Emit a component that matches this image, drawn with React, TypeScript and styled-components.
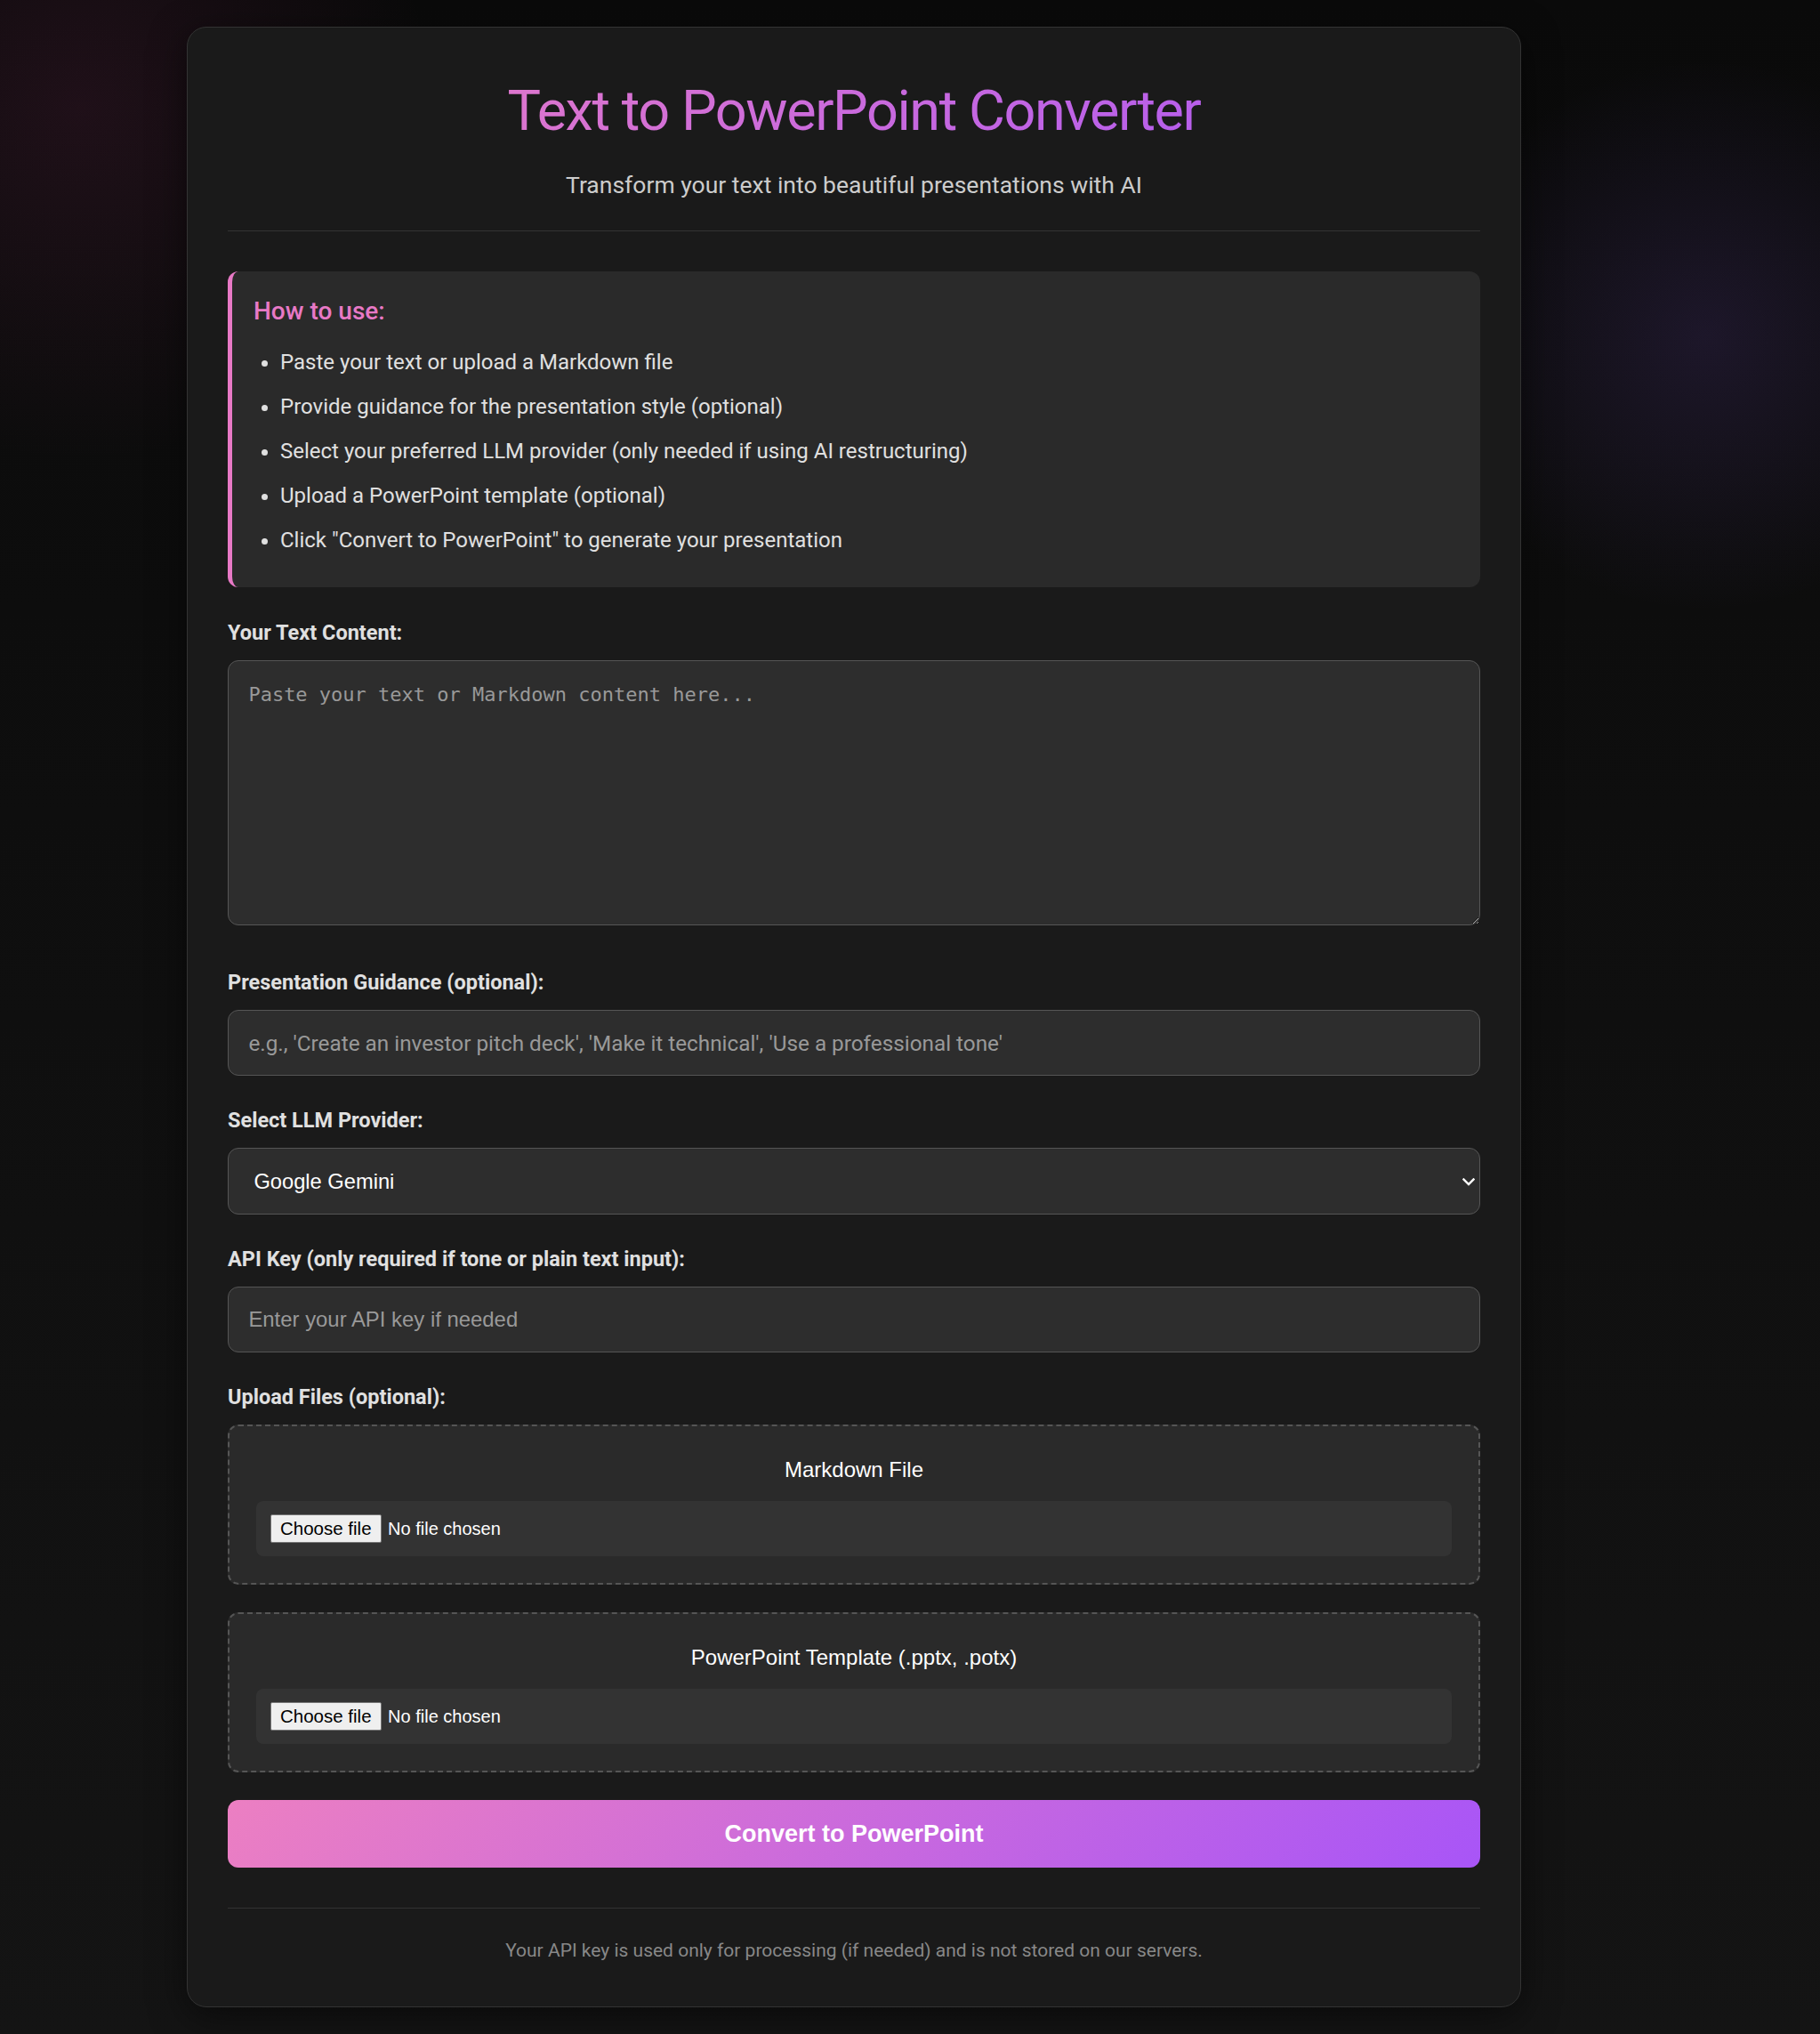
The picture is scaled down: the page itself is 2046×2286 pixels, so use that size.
import React from 'react';
import styled, { createGlobalStyle } from 'styled-components';

const GlobalStyle = createGlobalStyle`
  html, body {
    margin: 0;
    padding: 0;
  }
  body {
    background: #0a0a0a;
    font-family: Roboto, "Liberation Sans", Arial, sans-serif;
    color: #e0e0e0;
  }
  *, *::before, *::after {
    box-sizing: border-box;
  }
`;

const Page = styled.div`
  min-height: 100vh;
  padding: 30px 0 26px;
  background:
    radial-gradient(circle 310px at 1917px 377px, rgba(120, 80, 200, 0.16), rgba(120, 80, 200, 0) 100%),
    radial-gradient(circle 400px at 90px 120px, rgba(200, 60, 140, 0.11), rgba(200, 60, 140, 0) 100%),
    linear-gradient(180deg, #0a0a0a 0%, #141414 100%);
`;

const Frame = styled.div`
  width: 1920px;
`;

const Card = styled.main`
  width: 1500px;
  margin: 0 auto;
  background: #1a1a1a;
  border: 1px solid #333;
  border-radius: 22px;
  padding: 45px 45px 47px;
  box-shadow: 0 10px 40px rgba(0, 0, 0, 0.5);
`;

const Header = styled.header`
  text-align: center;
  padding-top: 12px;
  padding-bottom: 36px;
  border-bottom: 1px solid #333;
  margin-bottom: 45px;
`;

const Title = styled.h1`
  margin: 0;
  font-size: 63px;
  font-weight: 400;
  letter-spacing: -1.45px;
  line-height: 74px;
  background: linear-gradient(135deg, #ec7fc2 0%, #a855f7 100%);
  -webkit-background-clip: text;
  background-clip: text;
  color: transparent;
`;

const Subtitle = styled.p`
  margin: 30px 0 0;
  font-size: 26.5px;
  line-height: 31px;
  color: #cccccc;
`;

const HowTo = styled.section`
  background: #2a2a2a;
  border-left: 5px solid #e879c6;
  border-radius: 12px;
  padding: 28px 28px 21px 24px;
  margin-bottom: 37px;
`;

const HowToTitle = styled.h3`
  margin: 0 0 23px;
  font-size: 28px;
  font-weight: 500;
  line-height: 33px;
  color: #e879c6;
`;

const Steps = styled.ul`
  margin: 0;
  padding-left: 30px;
`;

const Step = styled.li`
  font-size: 24px;
  line-height: 36px;
  margin: 0 0 14px;
  color: #e0e0e0;
`;

const Field = styled.div<{ $mb?: number }>`
  margin-bottom: ${(p) => (p.$mb ?? 36)}px;
`;

const Label = styled.label`
  display: block;
  font-weight: 700;
  font-size: 23.5px;
  line-height: 28px;
  margin-bottom: 17px;
  color: #e0e0e0;
`;

const TextArea = styled.textarea`
  display: block;
  width: 100%;
  height: 298px;
  margin: 0;
  padding: 25px 22.4px 22.4px;
  background: #2d2d2d;
  border: 1px solid #555;
  border-radius: 12px;
  color: #fff;
  font-family: "DejaVu Sans Mono", "Liberation Mono", monospace;
  font-size: 22px;
  outline: none;
  &::placeholder {
    color: #999;
  }
`;

const TextInput = styled.input<{ $arial?: boolean }>`
  display: block;
  width: 100%;
  height: 74px;
  padding: 0 22.4px;
  background: #2d2d2d;
  border: 1px solid #555;
  border-radius: 12px;
  color: #fff;
  font-family: ${(p) =>
    p.$arial ? '"Liberation Sans", Arial, sans-serif' : 'Roboto, "Liberation Sans", Arial, sans-serif'};
  font-size: ${(p) => (p.$arial ? '23.9px' : '24.3px')};
  outline: none;
  &::placeholder {
    color: #999;
  }
`;

const SelectWrap = styled.div`
  position: relative;
`;

const Select = styled.select`
  display: block;
  width: 100%;
  height: 75px;
  padding: 0 40px 0 28.4px;
  appearance: none;
  -webkit-appearance: none;
  background-color: #2d2d2d;
  border: 1px solid #555;
  border-radius: 12px;
  color: #fff;
  font-family: "Liberation Sans", Arial, sans-serif;
  font-size: 23.7px;
  outline: none;
`;

const Chevron = styled.svg`
  position: absolute;
  right: 6px;
  top: 50%;
  width: 14px;
  height: 9px;
  margin-top: -4px;
  pointer-events: none;
`;

const UploadList = styled.div`
  display: flex;
  flex-direction: column;
  gap: 31px;
`;

const UploadBox = styled.div`
  background: #2a2a2a;
  border: 2px dashed #555;
  border-radius: 12px;
  padding: 30px;
  text-align: center;
`;

const UploadLabel = styled.div`
  font-family: "Liberation Sans", Arial, sans-serif;
  font-size: 24px;
  line-height: 37px;
  color: #fff;
  margin-bottom: 17px;
`;

const FilePicker = styled.label`
  display: flex;
  align-items: center;
  height: 62px;
  padding: 0 15.5px;
  background: #333;
  border-radius: 8px;
  text-align: left;
  cursor: pointer;
  font-family: "Liberation Sans", Arial, sans-serif;
  font-size: 20px;
  color: #fff;
`;

const HiddenFile = styled.input`
  display: none;
`;

const ChooseButton = styled.span`
  display: inline-flex;
  align-items: center;
  height: 32px;
  padding: 0 10.5px;
  margin-right: 7px;
  background: #efefef;
  border: 1px solid #767676;
  border-radius: 2px;
  color: #000;
  font-size: 20.5px;
`;

const FileStatus = styled.span`
  color: #fff;
`;

const ConvertButton = styled.button`
  display: block;
  width: 100%;
  height: 76px;
  border: none;
  border-radius: 12px;
  background: linear-gradient(135deg, #ec7fc2 0%, #a855f7 100%);
  color: #fff;
  font-family: "Liberation Sans", Arial, sans-serif;
  font-weight: 700;
  font-size: 27px;
  cursor: pointer;
`;

const Footer = styled.footer`
  margin-top: 45px;
  border-top: 1px solid #333;
  padding-top: 31px;
  text-align: center;
  color: #888;
  font-size: 21px;
  line-height: 32px;
`;

const steps = [
  'Paste your text or upload a Markdown file',
  'Provide guidance for the presentation style (optional)',
  'Select your preferred LLM provider (only needed if using AI restructuring)',
  'Upload a PowerPoint template (optional)',
  'Click "Convert to PowerPoint" to generate your presentation',
];

function FileField({ label, accept }: { label: string; accept: string }) {
  return (
    <UploadBox>
      <UploadLabel>{label}</UploadLabel>
      <FilePicker>
        <HiddenFile type="file" accept={accept} />
        <ChooseButton>Choose file</ChooseButton>
        <FileStatus>No file chosen</FileStatus>
      </FilePicker>
    </UploadBox>
  );
}

export default function App() {
  return (
    <>
      <GlobalStyle />
      <Page>
        <Frame>
          <Card>
            <Header>
              <Title>Text to PowerPoint Converter</Title>
              <Subtitle>Transform your text into beautiful presentations with AI</Subtitle>
            </Header>

            <HowTo>
              <HowToTitle>How to use:</HowToTitle>
              <Steps>
                {steps.map((s) => (
                  <Step key={s}>{s}</Step>
                ))}
              </Steps>
            </HowTo>

            <Field $mb={50}>
              <Label htmlFor="text">Your Text Content:</Label>
              <TextArea id="text" placeholder="Paste your text or Markdown content here..." />
            </Field>

            <Field>
              <Label htmlFor="guidance">Presentation Guidance (optional):</Label>
              <TextInput
                id="guidance"
                type="text"
                placeholder="e.g., 'Create an investor pitch deck', 'Make it technical', 'Use a professional tone'"
              />
            </Field>

            <Field>
              <Label htmlFor="provider">Select LLM Provider:</Label>
              <SelectWrap>
                <Select id="provider" defaultValue="gemini">
                  <option value="gemini">Google Gemini</option>
                  <option value="openai">OpenAI</option>
                  <option value="anthropic">Anthropic Claude</option>
                </Select>
                <Chevron viewBox="0 0 14 9" fill="none">
                  <path d="M1.5 1.5 L7 7 L12.5 1.5" stroke="#ffffff" strokeWidth="2.4" strokeLinecap="square" />
                </Chevron>
              </SelectWrap>
            </Field>

            <Field>
              <Label htmlFor="apikey">API Key (only required if tone or plain text input):</Label>
              <TextInput $arial id="apikey" type="password" placeholder="Enter your API key if needed" />
            </Field>

            <Field $mb={31}>
              <Label>Upload Files (optional):</Label>
              <UploadList>
                <FileField label="Markdown File" accept=".md,.markdown,.txt" />
                <FileField label="PowerPoint Template (.pptx, .potx)" accept=".pptx,.potx" />
              </UploadList>
            </Field>

            <ConvertButton type="button">Convert to PowerPoint</ConvertButton>

            <Footer>
              Your API key is used only for processing (if needed) and is not stored on our servers.
            </Footer>
          </Card>
        </Frame>
      </Page>
    </>
  );
}
